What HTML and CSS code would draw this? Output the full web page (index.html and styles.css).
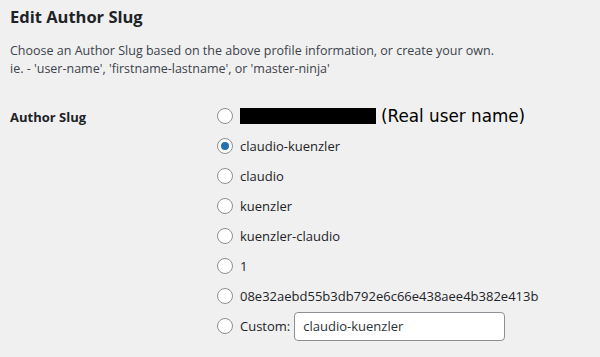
FILE: index.html
```html
<!DOCTYPE html>
<html lang="en">
<head>
    <meta charset="UTF-8">
    <title>Edit Author Slug</title>
    <link rel="stylesheet" href="styles.css">
</head>
<body>
    <h2 class="title">Edit Author Slug</h2>
    <p class="description">Choose an Author Slug based on the above profile information, or create your own.<br>ie. - 'user-name', 'firstname-lastname', or 'master-ninja'</p>

    <div class="form-row">
        <div class="row-label">Author Slug</div>
        <ul class="slug-list">
            <li><label><span class="radio"></span><span class="redacted"></span><span class="real-name">(Real user name)</span></label></li>
            <li><label><span class="radio checked"></span>claudio-kuenzler</label></li>
            <li><label><span class="radio"></span>claudio</label></li>
            <li><label><span class="radio"></span>kuenzler</label></li>
            <li><label><span class="radio"></span>kuenzler-claudio</label></li>
            <li><label><span class="radio"></span>1</label></li>
            <li><label><span class="radio"></span>08e32aebd55b3db792e6c66e438aee4b382e413b</label></li>
            <li><label><span class="radio"></span>Custom: <input type="text" class="custom-slug" value="claudio-kuenzler"></label></li>
        </ul>
    </div>
</body>
</html>
```

FILE: styles.css
```css
/* Base */
body {
    margin: 0;
    padding: 0 10px;
    background-color: #f0f0f1;
    color: #1d2327;
    font-family: "Open Sans", sans-serif;
    font-size: 13px;
}

.title {
    margin: 0;
    padding-top: 5px;
    font-size: 16.5px;
    font-weight: 700;
    line-height: 24px;
}

.description {
    margin: 13px 0 0;
    color: #3c434a;
    font-size: 12.5px;
    line-height: 18px;
}

/* Form row */
.form-row {
    display: flex;
    margin-top: 26px;
}

.row-label {
    width: 207px;
    font-weight: 700;
    font-size: 13px;
    line-height: 20px;
    padding-top: 3px;
}

.slug-list {
    list-style: none;
    margin: 0;
    padding: 2px 0 0;
}

.slug-list li {
    height: 30px;
}

.slug-list label {
    display: flex;
    align-items: center;
    height: 20px;
    line-height: 20px;
}

.radio {
    box-sizing: border-box;
    width: 16px;
    height: 16px;
    margin-right: 7px;
    border: 1px solid #8c8f94;
    border-radius: 50%;
    background-color: #fff;
    position: relative;
}

.radio.checked::after {
    content: "";
    position: absolute;
    left: 3px;
    top: 3px;
    width: 8px;
    height: 8px;
    border-radius: 50%;
    background-color: #2271b1;
}

.redacted {
    display: inline-block;
    width: 136px;
    height: 16px;
    background-color: #000;
}

.real-name {
    margin-left: 5px;
    font-family: "DejaVu Sans", sans-serif;
    font-size: 16.8px;
    color: #000;
}

.custom-slug {
    box-sizing: border-box;
    width: 211px;
    height: 29px;
    margin-left: 4px;
    padding: 0 8px;
    border: 1px solid #8c8f94;
    border-radius: 4px;
    background-color: #fff;
    color: #2c3338;
    font-family: "Open Sans", sans-serif;
    font-size: 13px;
}
```
